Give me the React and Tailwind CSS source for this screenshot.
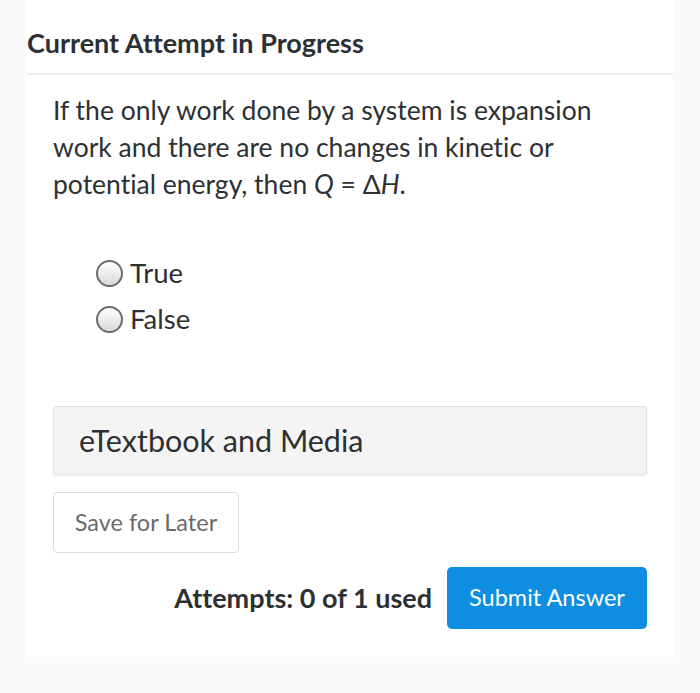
import React from "react";

const Radio = ({ label }) => (
  <label className="flex items-center gap-[7px] h-[46px]">
    <span className="w-[27px] h-[27px] rounded-full border-2 border-[#6b6b6b] bg-gradient-to-b from-[#ffffff] to-[#d9d9d9]" />
    <span className="text-[27.5px] text-[#2d3033]">{label}</span>
  </label>
);

export default function App() {
  return (
    <div
      className="w-[700px] h-[693px] bg-[#fafafa] overflow-hidden [font-variant-ligatures:none]"
      style={{ fontFamily: "Lato, 'Open Sans', sans-serif" }}
    >
      <div className="ml-[27px] w-[646px] h-[657px] bg-white flex flex-col">
        <div className="relative h-0">
          <div className="absolute left-[6px] top-[-24px] text-[24px] text-[#3a9ead] leading-[28px]">View Policies</div>
        </div>
        <h1 className="pt-[26px] h-[73px] text-[27px] font-bold text-[#2d3033] leading-[34px]">
          Current Attempt in Progress
        </h1>
        <div className="h-[2px] bg-[#ececec]" />
        <div className="px-[26px] pt-[17px]">
          <p className="text-[26.5px] leading-[37px] text-[#2d3033]">
            If the only work done by a system is expansion work and there are no changes in kinetic or potential energy, then <i>Q</i> = Δ<i>H</i>.
          </p>
          <div className="mt-[47px] ml-[43px] flex flex-col">
            <Radio label="True" />
            <Radio label="False" />
          </div>
          <div className="mt-[64px] h-[69px] flex items-center pl-[25px] bg-[#f4f4f4] border border-[#e3e3e3] rounded-[3px] shadow-[0_1px_2px_rgba(0,0,0,0.08)]">
            <span className="text-[30.5px] text-[#2d3033]">eTextbook and Media</span>
          </div>
          <button className="mt-[17px] w-[186px] h-[61px] border border-[#dcdcdc] rounded-[4px] bg-white text-[23.5px] text-[#6a6a6a]">
            Save for Later
          </button>
          <div className="mt-[14px] flex items-center justify-end gap-[15px]">
            <span className="text-[27px] font-bold text-[#2d3033]">Attempts: 0 of 1 used</span>
            <button className="w-[200px] h-[62px] rounded-[5px] bg-[#0d8ee0] text-[23.5px] text-white">
              Submit Answer
            </button>
          </div>
        </div>
      </div>
    </div>
  );
}
